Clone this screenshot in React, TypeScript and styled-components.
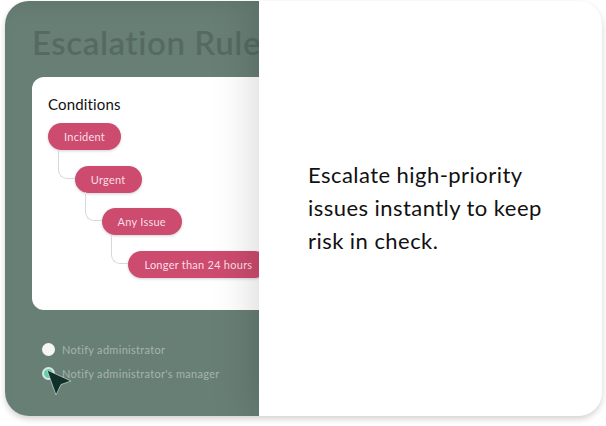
import React, { FC, ReactElement } from 'react';
import styled, { createGlobalStyle } from 'styled-components';

const GlobalStyle = createGlobalStyle`
  html, body {
    margin: 0;
    padding: 0;
    background: #fff;
    font-family: 'Lato', 'Inter', sans-serif;
  }
`;

const Page = styled.div`
  width: 606px;
  height: 426px;
  padding: 1px 4px 10px 5px;
  box-sizing: border-box;
  overflow: hidden;
`;

const Frame = styled.div`
  display: flex;
  height: 100%;
  border-radius: 24px;
  overflow: hidden;
  background: #fff;
  box-shadow: 0 3px 6px rgba(0, 0, 0, 0.18);
`;

const LeftPanel = styled.div`
  position: relative;
  flex: 0 0 254px;
  padding: 22px 0 0 27px;
  box-sizing: border-box;
  overflow: hidden;
  background: #687f76;
  box-shadow: inset 0 14px 24px -12px rgba(0, 0, 0, 0.1);
`;

const Title = styled.h1`
  margin: 0 0 16px 0;
  font-size: 33px;
  line-height: 38px;
  font-weight: 600;
  letter-spacing: 0.6px;
  white-space: nowrap;
  color: #556b62;
`;

const Card = styled.div`
  width: 300px;
  height: 233px;
  padding: 18px 0 0 16px;
  box-sizing: border-box;
  border-radius: 12px;
  background: #fff;
`;

const CardTitle = styled.div`
  font-size: 15px;
  line-height: 18px;
  color: #111;
  letter-spacing: 0.15px;
  margin-bottom: 10px;
`;

const Tree = styled.div`
  display: flex;
  flex-direction: column;
  align-items: flex-start;
  gap: 15.7px;
`;

const Pill = styled.div<{ $level: number }>`
  position: relative;
  margin-left: ${(p) => p.$level * 26.8}px;
  height: 27px;
  padding: 0 16px;
  border-radius: 13.5px;
  background: #cd4b6e;
  box-shadow: 0 1px 3px rgba(0, 0, 0, 0.18);
  color: #f8dfe6;
  font-size: 11px;
  line-height: 27px;
  letter-spacing: 0.25px;
  white-space: nowrap;

  &::before {
    content: '';
    display: ${(p) => (p.$level > 0 ? 'block' : 'none')};
    position: absolute;
    left: -17px;
    top: -16px;
    width: 17px;
    height: 29px;
    box-sizing: border-box;
    border-left: 1px solid #d8d8d8;
    border-bottom: 1px solid #d8d8d8;
    border-bottom-left-radius: 9px;
  }
`;

const Options = styled.div`
  display: flex;
  flex-direction: column;
  gap: 10px;
  margin: 32px 0 0 10px;
`;

const Option = styled.div`
  display: flex;
  align-items: center;
  gap: 7px;
  height: 14px;
  color: #a5b5ae;
  font-size: 11px;
  letter-spacing: 0.3px;
  white-space: nowrap;
`;

const Radio = styled.span<{ $checked?: boolean }>`
  flex: none;
  width: 13px;
  height: 13px;
  box-sizing: border-box;
  border-radius: 50%;
  background: ${(p) => (p.$checked ? '#5fcfb0' : '#f6f5f3')};
  border: ${(p) => (p.$checked ? '2px solid #d9e6e1' : 'none')};
`;

const Cursor = styled.svg`
  position: absolute;
  left: 40px;
  top: 367px;
  width: 28px;
  height: 28px;
`;

const RightPanel = styled.div`
  position: relative;
  z-index: 1;
  flex: 1;
  display: flex;
  align-items: center;
  padding: 0 0 2px 49px;
  background: #fff;
  box-shadow: -6px 0 40px rgba(0, 0, 0, 0.15);
`;

const Message = styled.p`
  margin: 0;
  font-size: 22px;
  line-height: 33px;
  letter-spacing: 0.45px;
  color: #111;
`;

type OptionItem = {
  label: string;
  checked?: boolean;
};

const conditions = ['Incident', 'Urgent', 'Any Issue', 'Longer than 24 hours'];
const options: OptionItem[] = [
  { label: 'Notify administrator' },
  { label: "Notify administrator's manager", checked: true },
];

const App: FC = (): ReactElement => {
  return (
    <Page>
      <GlobalStyle />
      <Frame>
        <LeftPanel>
          <Title>Escalation Rules</Title>
          <Card>
            <CardTitle>Conditions</CardTitle>
            <Tree>
              {conditions.map((label, i) => (
                <Pill key={label} $level={i}>
                  {label}
                </Pill>
              ))}
            </Tree>
          </Card>
          <Options>
            {options.map((o) => (
              <Option key={o.label}>
                <Radio $checked={o.checked} />
                {o.label}
              </Option>
            ))}
          </Options>
          <Cursor viewBox="0 0 28 28">
            <path
              d="M2 2 L26 13 L16 16.5 L11 27 Z"
              fill="#10302a"
              stroke="#e8eeeb"
              strokeWidth="0.6"
              strokeLinejoin="round"
            />
          </Cursor>
        </LeftPanel>
        <RightPanel>
          <Message>
            Escalate high-priority
            <br />
            issues instantly to keep
            <br />
            risk in check.
          </Message>
        </RightPanel>
      </Frame>
    </Page>
  );
};

export default App;
